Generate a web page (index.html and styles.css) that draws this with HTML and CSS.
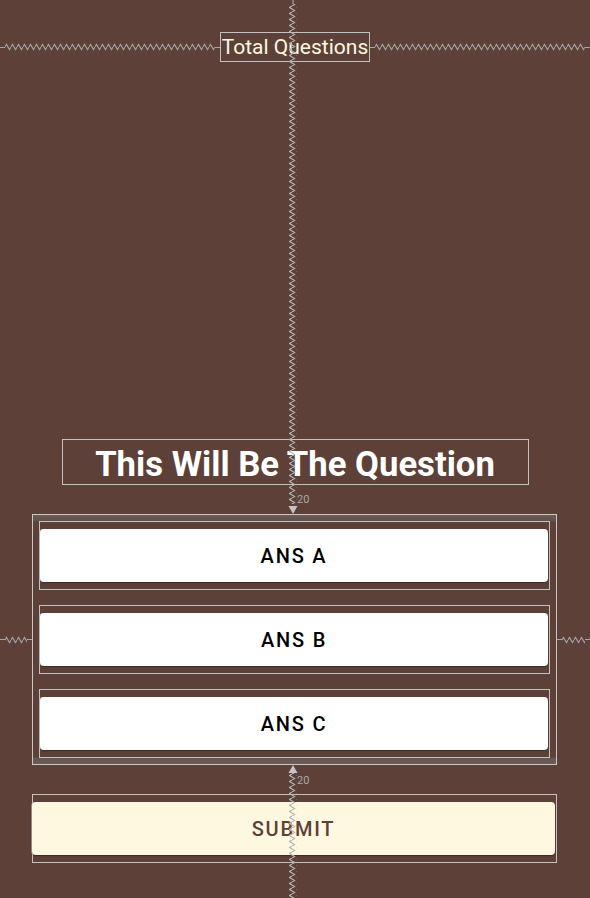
FILE: index.html
```html
<!DOCTYPE html>
<html>
<head>
<meta charset="utf-8">
<link rel="stylesheet" href="styles.css">
</head>
<body>
<svg class="defs" width="0" height="0" aria-hidden="true">
  <defs>
    <pattern id="zh" width="6" height="8" patternUnits="userSpaceOnUse">
      <path d="M0 4 L1.5 1.5 L4.5 6.5 L6 4" fill="none" stroke="#a0a0a0" stroke-width="1.2"/>
    </pattern>
    <pattern id="zv" width="8" height="6" patternUnits="userSpaceOnUse">
      <path d="M4 0 L1.5 1.5 L6.5 4.5 L4 6" fill="none" stroke="#b4b4b4" stroke-width="1.2"/>
    </pattern>
  </defs>
</svg>
<div class="screen">
  <div class="header-row">
    <div class="guide">
      <span class="stub"></span>
      <svg class="zig"><rect width="100%" height="100%" fill="url(#zh)"/></svg>
      <span class="stub"></span>
    </div>
    <div class="total">Total Questions</div>
    <div class="guide">
      <span class="stub"></span>
      <svg class="zig"><rect width="100%" height="100%" fill="url(#zh)"/></svg>
      <span class="stub"></span>
    </div>
  </div>

  <div class="question">This Will Be The Question</div>

  <div class="answers-row">
    <div class="guide side">
      <span class="stub"></span>
      <svg class="zig"><rect width="100%" height="100%" fill="url(#zh)"/></svg>
      <span class="stub"></span>
    </div>
    <div class="answers">
      <div class="slot"><div class="btn ans">ANS A</div></div>
      <div class="slot"><div class="btn ans">ANS B</div></div>
      <div class="slot"><div class="btn ans">ANS C</div></div>
    </div>
    <div class="guide side">
      <span class="stub"></span>
      <svg class="zig"><rect width="100%" height="100%" fill="url(#zh)"/></svg>
      <span class="stub"></span>
    </div>
  </div>

  <div class="submit-box"><div class="btn submit">SUBMIT</div></div>

  <svg class="overlay" viewBox="0 0 590 898" width="590" height="898">
    <line x1="293" y1="0" x2="293" y2="4" stroke="#b4b4b4"/>
    <rect x="289" y="4" width="8" height="500" fill="url(#zv)"/>
    <polygon points="288.5,506 297.5,506 293,514" fill="#c4c4c4"/>
    <text x="297" y="503" class="dim">20</text>
    <polygon points="288.5,773 297.5,773 293,765" fill="#c4c4c4"/>
    <text x="297" y="784" class="dim">20</text>
    <rect x="289" y="773" width="8" height="125" fill="url(#zv)"/>
  </svg>
</div>
</body>
</html>
```

FILE: styles.css
```css
html, body {
  margin: 0;
  padding: 0;
}
body {
  background: #5d4037;
  font-family: Roboto, "Liberation Sans", sans-serif;
}
.defs {
  position: absolute;
  width: 0;
  height: 0;
}
.screen {
  position: relative;
  width: 590px;
  height: 898px;
  overflow: hidden;
  background: #5d4037;
}
.header-row {
  display: flex;
  align-items: center;
  padding-top: 32px;
}
.guide {
  flex: 1 1 0;
  min-width: 0;
  display: flex;
  align-items: center;
  height: 9px;
}
.stub {
  flex: 0 0 5px;
  height: 0;
  border-top: 1px solid #a7a7a7;
}
.zig {
  flex: 1 1 0;
  min-width: 0;
  width: 0;
  height: 8px;
  display: block;
}
.total {
  flex: none;
  box-sizing: border-box;
  height: 30px;
  border: 1px solid #c2c2c2;
  padding: 0 1px;
  color: #fff8e1;
  font-size: 21px;
  line-height: 28px;
  white-space: nowrap;
}
.question {
  box-sizing: border-box;
  width: 467px;
  height: 46px;
  margin: 377px auto 0;
  border: 1px solid #c2c2c2;
  padding-top: 2px;
  color: #ffffff;
  font-weight: 700;
  font-size: 34.7px;
  line-height: 44px;
  text-align: center;
  white-space: nowrap;
}
.answers-row {
  display: flex;
  align-items: center;
  margin-top: 29px;
}
.answers-row .side:first-child {
  flex: 0 0 32px;
}
.answers {
  flex: none;
  box-sizing: border-box;
  width: 525px;
  border: 1px solid #c8c8c8;
  padding: 6px;
  display: flex;
  flex-direction: column;
  gap: 15px;
  background: linear-gradient(to bottom, #6c5b56 0, #63504a 6px, #5d4037 7px, #5d4037 calc(100% - 7px), #665550 calc(100% - 6px), #6c5b56 100%);
}
.slot {
  box-sizing: border-box;
  height: 69px;
  border: 1px solid #c2c2c2;
  padding: 7px 1px 7px 0;
  background: #5d4037;
}
.btn {
  height: 53px;
  border-radius: 4px;
  display: flex;
  align-items: center;
  justify-content: center;
  font-weight: 500;
  font-size: 20px;
  letter-spacing: 1.8px;
  white-space: nowrap;
  box-shadow: 0 1px 1px rgba(0, 0, 0, 0.35), -1px 0 0 rgba(190, 190, 190, 0.6);
}
.ans {
  background: #ffffff;
  color: #000000;
}
.submit-box {
  box-sizing: border-box;
  width: 525px;
  height: 69px;
  margin: 29px 0 0 32px;
  border: 1px solid #c2c2c2;
  padding: 7px 0;
}
.submit {
  margin-left: -1px;
  margin-right: 1px;
  background: #fff8e1;
  color: #5d4037;
}
.overlay {
  position: absolute;
  left: 0;
  top: 0;
  pointer-events: none;
}
.dim {
  font-family: Roboto, "Liberation Sans", sans-serif;
  font-size: 11px;
  fill: #a9a9a9;
}
```
